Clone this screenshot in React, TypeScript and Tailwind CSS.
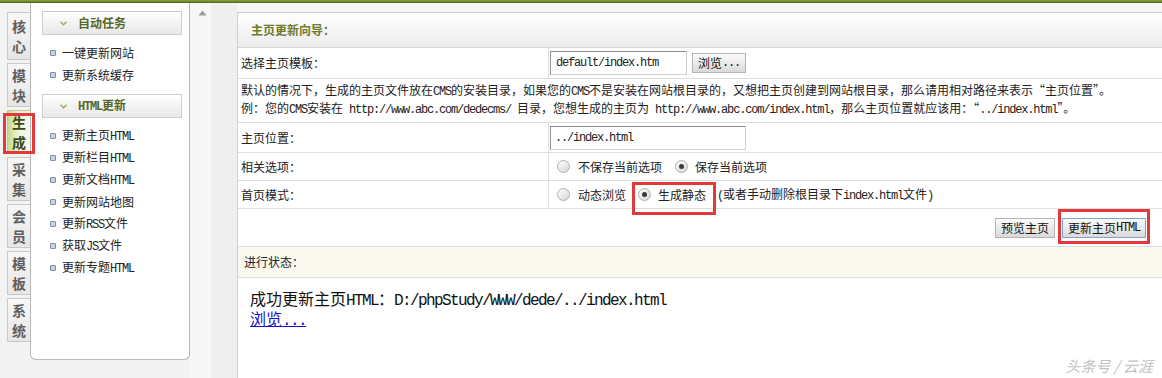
import React from "react";

// SimSun-like half-width latin: Courier metrics squeezed to 0.5em
const M: React.FC<{ children: React.ReactNode; big?: boolean; className?: string }> = ({ children, big, className = "" }) => (
  <span
    className={`font-['Liberation_Mono',monospace] ${
      big ? "text-[16px] tracking-[-1.6px]" : "text-[12px] tracking-[-1.2px]"
    } ${className}`}
  >
    {children}
  </span>
);

const tabs = [
  { a: "核", b: "心", h: "h-[48px]" },
  { a: "模", b: "块", h: "h-[44px]" },
  { a: "生", b: "成", h: "h-[44px]", active: true },
  { a: "采", b: "集", h: "h-[44px]" },
  { a: "会", b: "员", h: "h-[44px]" },
  { a: "模", b: "板", h: "h-[44px]" },
  { a: "系", b: "统", h: "h-[44px]" },
];

const Chevron = () => (
  <svg width="7" height="5" viewBox="0 0 7 5" className="shrink-0">
    <path d="M0.5 0.8 L3.5 3.8 L6.5 0.8" fill="none" stroke="#8fae45" strokeWidth="1.3" />
  </svg>
);

const MenuHeader: React.FC<{ children: React.ReactNode }> = ({ children }) => (
  <div className="ml-[11px] w-[140px] h-[24px] flex items-center pl-[17px] border border-[#cdcdcd] bg-linear-to-b from-white to-[#e8e8e8] text-[12px] font-bold text-[#56672a]">
    <Chevron />
    <span className="ml-[11px] leading-none">{children}</span>
  </div>
);

const MenuItem: React.FC<{ children: React.ReactNode }> = ({ children }) => (
  <div className="ml-[19px] h-[22px] flex items-center text-[12px] text-[#222]">
    <span className="w-[6px] h-[6px] border border-[#7f8ea8] bg-[#c8d2e2] rounded-[1px] shrink-0" />
    <span className="ml-[6px] leading-none">{children}</span>
  </div>
);

const Radio: React.FC<{ checked?: boolean }> = ({ checked }) => (
  <span className="w-[13px] h-[13px] rounded-full border border-[#b0b0b0] bg-linear-to-br from-[#ffffff] to-[#d6d6d6] flex items-center justify-center shrink-0">
    {checked && <span className="w-[5px] h-[5px] rounded-full bg-[#3a3a3a]" />}
  </span>
);

const Btn: React.FC<{ children: React.ReactNode; focus?: boolean }> = ({ children, focus }) => (
  <button
    type="button"
    className={`h-[20px] px-[5px] flex items-center text-[12px] leading-none text-[#111] bg-linear-to-b from-[#fbfbfb] to-[#dadada] border ${
      focus ? "border-[#7ea3d4]" : "border-[#b4b4b4]"
    }`}
  >
    {children}
  </button>
);

export default function App() {
  return (
    <div className="relative w-[1162px] h-[378px] overflow-hidden bg-[#f3f3f3] flex flex-col font-['Noto_Sans_CJK_SC',sans-serif] text-[#222]">
      <div className="h-[3px] bg-linear-to-b from-[#8da63f] to-[#4c6816] shrink-0" />
      <div className="flex flex-1 min-h-0">
        {/* vertical tabs */}
        <div className="w-[30px] pt-[9px] pl-[7px] flex flex-col gap-[3px] shrink-0">
          {tabs.map((t, i) => (
            <div
              key={i}
              className={`relative ${t.h} w-[23px] border border-r-0 flex flex-col items-center justify-center text-[14px] font-bold leading-[20px] ${
                t.active
                  ? "border-[#b9c99a] bg-linear-to-r from-[#c4dc8a] via-[#eef4de] to-[#f5f8ee] text-[#3c4a1a]"
                  : "border-[#c9c9c9] bg-linear-to-b from-[#f7f7f7] to-[#e6e6e6] text-[#5e5e5e]"
              }`}
            >
              <span>{t.a}</span>
              <span>{t.b}</span>
              {t.active && (
                <div className="absolute left-[-5px] right-[-5px] top-[2px] bottom-[-1px] border-[3px] border-[#e2393a]" />
              )}
            </div>
          ))}
        </div>

        {/* menu panel */}
        <div className="w-[160px] h-[357px] bg-white border border-t-0 border-[#b8b8b8] rounded-b-[6px] pt-[8px] shrink-0">
          <MenuHeader>自动任务</MenuHeader>
          <div className="mt-[7px]">
            <MenuItem>一键更新网站</MenuItem>
            <MenuItem>更新系统缓存</MenuItem>
          </div>
          <div className="mt-[8px]">
            <MenuHeader>
              <M className="font-bold">HTML</M>更新
            </MenuHeader>
          </div>
          <div className="mt-[7px]">
            <MenuItem>
              更新主页<M>HTML</M>
            </MenuItem>
            <MenuItem>
              更新栏目<M>HTML</M>
            </MenuItem>
            <MenuItem>
              更新文档<M>HTML</M>
            </MenuItem>
            <MenuItem>更新网站地图</MenuItem>
            <MenuItem>
              更新<M>RSS</M>文件
            </MenuItem>
            <MenuItem>
              获取<M>JS</M>文件
            </MenuItem>
            <MenuItem>
              更新专题<M>HTML</M>
            </MenuItem>
          </div>
        </div>

        {/* scroll strip */}
        <div className="w-[47px] flex shrink-0">
          <div className="w-[21px] bg-[#f7f7f7] flex justify-center pt-[7px]">
            <svg width="9" height="6" viewBox="0 0 9 6" className="ml-[4px]">
              <path d="M4.5 0.5 L8.5 5.5 L0.5 5.5 Z" fill="#9a9a9a" />
            </svg>
          </div>
          <div className="flex-1 bg-[#efefef]" />
        </div>

        {/* main */}
        <div className="flex-1 pt-[9px] bg-[#f6f6f6] min-w-0">
          <div className="h-full bg-white border-l border-t border-[#cfcfcf] flex flex-col text-[12px]">
            <div className="h-[35px] shrink-0 flex items-center pl-[13px] border-b border-[#d6d6d6] bg-linear-to-b from-white to-[#ececec] font-bold text-[#6e7a2c]">
              主页更新向导：
            </div>

            <div className="h-[31px] shrink-0 flex border-b border-[#dedede]">
              <div className="w-[311px] border-r border-[#dedede] pl-[3px] flex items-center">选择主页模板：</div>
              <div className="flex items-center pl-[1px]">
                <div className="w-[137px] h-[24px] border border-[#8e8e8e] border-r-[#d0d0d0] border-b-[#d0d0d0] flex items-center pl-[5px]">
                  <M>default/index.htm</M>
                </div>
                <div className="ml-[5px]">
                  <Btn>
                    浏览<M>...</M>
                  </Btn>
                </div>
              </div>
            </div>

            <div className="h-[44px] shrink-0 border-b border-[#dedede] pl-[3px] pt-[3px] whitespace-nowrap">
              <div className="h-[18px] flex items-center">
                <span>
                  默认的情况下，生成的主页文件放在<M>CMS</M>的安装目录，如果您的<M>CMS</M>不是安装在网站根目录的，又想把主页创建到网站根目录，那么请用相对路径来表示“主页位置”。
                </span>
              </div>
              <div className="h-[18px] flex items-center">
                <span>
                  例：您的<M>CMS</M>安装在<M> http://www.abc.com/dedecms/ </M>目录，您想生成的主页为<M> http://www.abc.com/index.html</M>，那么主页位置就应该用：“<M>../index.html</M>”。
                </span>
              </div>
            </div>

            <div className="h-[30px] shrink-0 flex border-b border-[#dedede]">
              <div className="w-[311px] border-r border-[#dedede] pl-[3px] flex items-center">主页位置：</div>
              <div className="flex items-center pl-[1px]">
                <div className="w-[196px] h-[24px] border border-[#8e8e8e] border-r-[#d0d0d0] border-b-[#d0d0d0] flex items-center pl-[4px]">
                  <M>../index.html</M>
                </div>
              </div>
            </div>

            <div className="h-[28px] shrink-0 flex border-b border-[#dedede]">
              <div className="w-[311px] border-r border-[#dedede] pl-[3px] flex items-center">相关选项：</div>
              <div className="flex items-center pl-[8px]">
                <Radio />
                <span className="ml-[8px]">不保存当前选项</span>
                <span className="ml-[13px]">
                  <Radio checked />
                </span>
                <span className="ml-[7px]">保存当前选项</span>
              </div>
            </div>

            <div className="h-[28px] shrink-0 flex border-b border-[#dedede]">
              <div className="w-[311px] border-r border-[#dedede] pl-[3px] flex items-center">首页模式：</div>
              <div className="flex items-center pl-[8px]">
                <Radio />
                <span className="ml-[8px]">动态浏览</span>
                <span className="relative ml-[12px] flex items-center">
                  <Radio checked />
                  <span className="ml-[7px]">生成静态</span>
                  <span className="absolute left-[-6px] right-[-10px] top-[-4px] bottom-[-11px] border-[3px] border-[#e2393a]" />
                </span>
                <span className="ml-[11px]">
                  <M>(</M>或者手动删除根目录下<M>index.html</M>文件<M>)</M>
                </span>
              </div>
            </div>

            <div className="h-[38px] shrink-0 flex items-center justify-end pr-[16px] border-b border-[#dedede]">
              <Btn>预览主页</Btn>
              <span className="relative ml-[7px]">
                <Btn focus>
                  更新主页<M>HTML</M>
                </Btn>
                <span className="absolute left-[-4px] right-[-4px] top-[-9px] bottom-[-6px] border-[3px] border-[#e2393a]" />
              </span>
            </div>

            <div className="h-[31px] shrink-0 flex items-center pl-[6px] bg-[#f9f9ef] border-b border-[#dedede]">
              进行状态：
            </div>

            <div className="pl-[12px] pt-[11px] text-[16px] text-[#111]">
              <div className="h-[20px] flex items-center">
                <span>
                  成功更新主页<M big>HTML</M>：<M big>D:/phpStudy/WWW/dede/../index.html</M>
                </span>
              </div>
              <div className="h-[20px] flex items-center">
                <a href="#" className="text-[#1010cc] underline">
                  浏览<M big>...</M>
                </a>
              </div>
            </div>
          </div>
        </div>
      </div>

      <div className="absolute right-[9px] bottom-[5px] text-[15px] italic text-[#c2c2c2] leading-none">头条号 / 云涯</div>
    </div>
  );
}
